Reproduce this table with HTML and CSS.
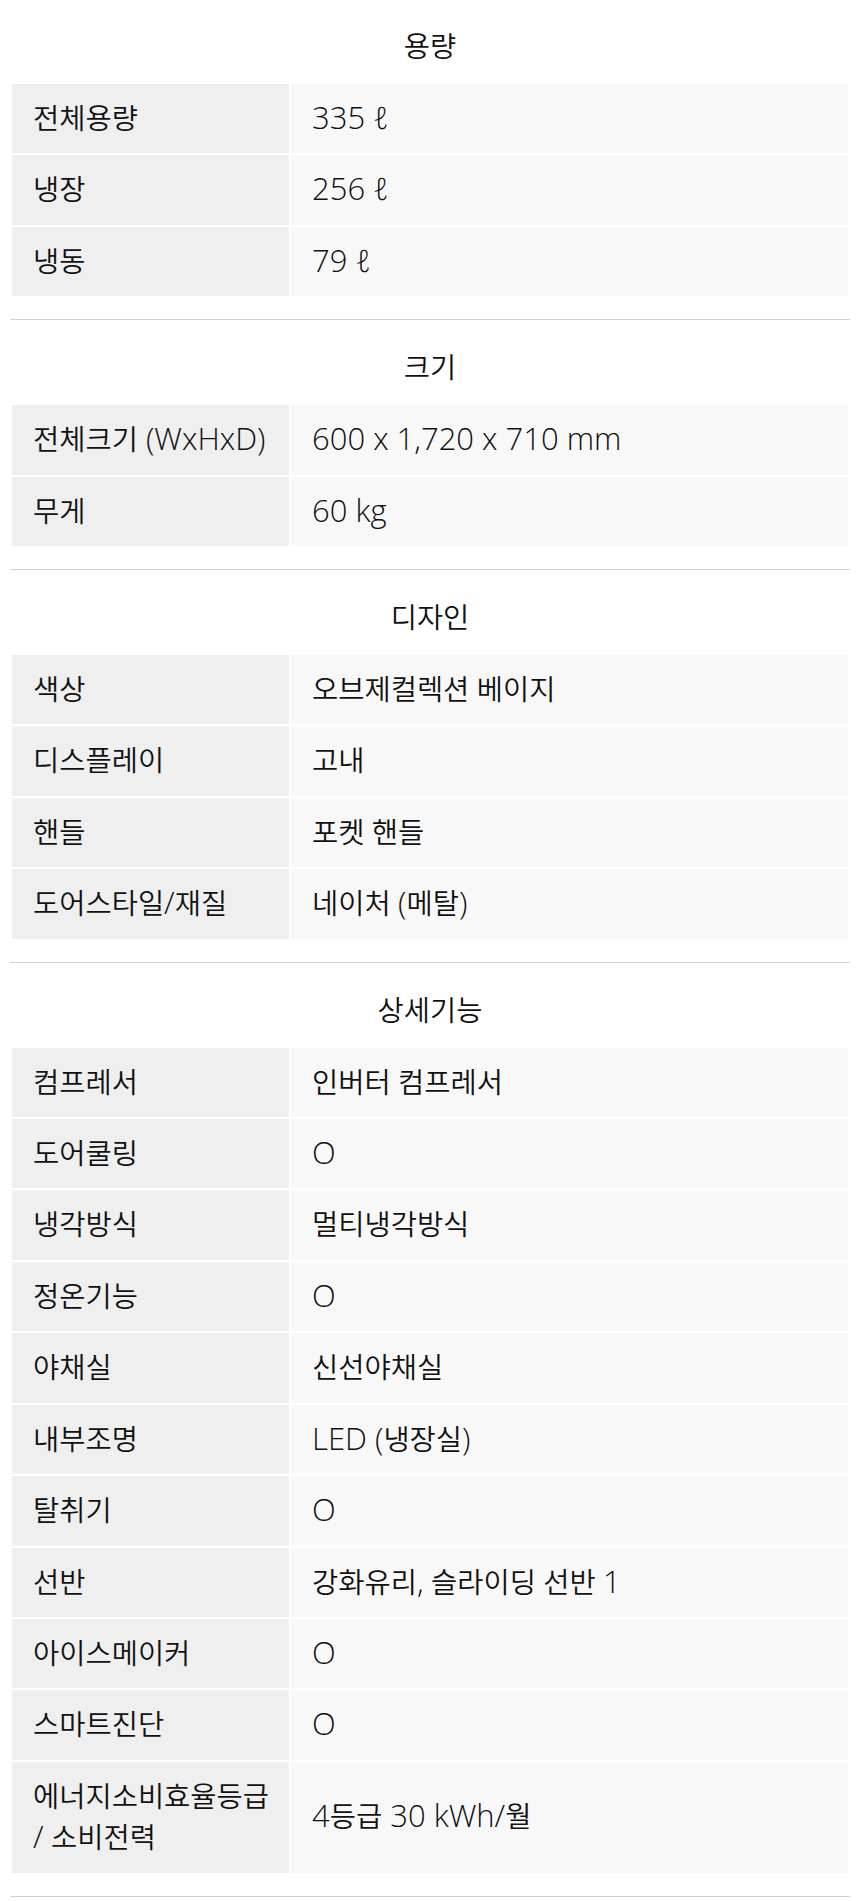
FILE: index.html
```html
<!DOCTYPE html>
<html lang="ko">
<head>
<meta charset="utf-8">
<title>제품 사양</title>
<link rel="stylesheet" href="styles.css">
</head>
<body>
<div class="specs">
  <section class="spec-group">
    <h3 class="spec-title">용량</h3>
    <table class="spec-table">
      <tr><th>전체용량</th><td><span class="lat">335 ℓ</span></td></tr>
      <tr><th>냉장</th><td><span class="lat">256 ℓ</span></td></tr>
      <tr><th>냉동</th><td><span class="lat">79 ℓ</span></td></tr>
    </table>
  </section>
  <section class="spec-group">
    <h3 class="spec-title">크기</h3>
    <table class="spec-table">
      <tr><th>전체크기<span class="lat"> (WxHxD)</span></th><td><span class="lat">600 x 1,720 x 710 mm</span></td></tr>
      <tr><th>무게</th><td><span class="lat">60 kg</span></td></tr>
    </table>
  </section>
  <section class="spec-group">
    <h3 class="spec-title">디자인</h3>
    <table class="spec-table">
      <tr><th>색상</th><td>오브제컬렉션 베이지</td></tr>
      <tr><th>디스플레이</th><td>고내</td></tr>
      <tr><th>핸들</th><td>포켓 핸들</td></tr>
      <tr><th>도어스타일<span class="lat">/</span>재질</th><td>네이처 <span class="lat">(</span>메탈<span class="lat">)</span></td></tr>
    </table>
  </section>
  <section class="spec-group">
    <h3 class="spec-title">상세기능</h3>
    <table class="spec-table">
      <tr><th>컴프레서</th><td>인버터 컴프레서</td></tr>
      <tr><th>도어쿨링</th><td><span class="lat">O</span></td></tr>
      <tr><th>냉각방식</th><td>멀티냉각방식</td></tr>
      <tr><th>정온기능</th><td><span class="lat">O</span></td></tr>
      <tr><th>야채실</th><td>신선야채실</td></tr>
      <tr><th>내부조명</th><td><span class="lat">LED (</span>냉장실<span class="lat">)</span></td></tr>
      <tr><th>탈취기</th><td><span class="lat">O</span></td></tr>
      <tr><th>선반</th><td>강화유리<span class="lat">,</span> 슬라이딩 선반 <span class="lat">1</span></td></tr>
      <tr><th>아이스메이커</th><td><span class="lat">O</span></td></tr>
      <tr><th>스마트진단</th><td><span class="lat">O</span></td></tr>
      <tr><th>에너지소비효율등급<br><span class="lat">/</span> 소비전력</th><td><span class="lat">4</span>등급<span class="lat"> 30 kWh/</span>월</td></tr>
    </table>
  </section>
</div>
</body>
</html>
```
FILE: styles.css
```css
html, body {
  margin: 0;
  padding: 0;
  background: #ffffff;
}
body {
  font-family: "Open Sans", "Noto Sans CJK KR", sans-serif;
  font-weight: 350;
  color: #111111;
}
.specs {
  padding: 0 10px;
}
.spec-group {
  padding-top: 25px;
  border-bottom: 1px solid #d2d2d2;
  padding-bottom: 21px;
}
.spec-group + .spec-group {
  padding-top: 26px;
}
.spec-title {
  margin: 0 0 15px;
  font-size: 28.5px;
  line-height: 42px;
  font-weight: 350;
  text-align: center;
}
.spec-table {
  width: 100%;
  border-collapse: separate;
  border-spacing: 2px;
  table-layout: fixed;
}
.spec-table th,
.spec-table td {
  box-sizing: border-box;
  padding: 14px 6px 14px 21px;
  font-size: 28.5px;
  line-height: 41.4px;
  font-weight: 350;
  text-align: left;
  vertical-align: middle;
}
.spec-table th {
  width: 277px;
  background: #efefef;
}
.spec-table td {
  background: #f8f8f8;
}
.lat {
  font-family: "Open Sans", sans-serif;
  font-size: 31px;
  font-weight: 300;
  line-height: 1;
}
```
